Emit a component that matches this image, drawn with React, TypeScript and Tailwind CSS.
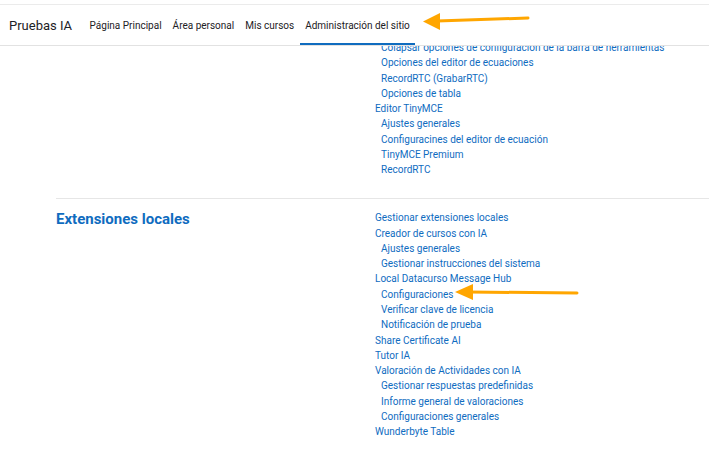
const font = { fontFamily: 'Roboto, "Open Sans", sans-serif' };

type Item = { label: string; sub?: boolean };

const previous: Item[] = [
  { label: 'Colapsar opciones de configuración de la barra de herramientas', sub: true },
  { label: 'Opciones del editor de ecuaciones', sub: true },
  { label: 'RecordRTC (GrabarRTC)', sub: true },
  { label: 'Opciones de tabla', sub: true },
  { label: 'Editor TinyMCE' },
  { label: 'Ajustes generales', sub: true },
  { label: 'Configuracines del editor de ecuación', sub: true },
  { label: 'TinyMCE Premium', sub: true },
  { label: 'RecordRTC', sub: true },
];

const local: Item[] = [
  { label: 'Gestionar extensiones locales' },
  { label: 'Creador de cursos con IA' },
  { label: 'Ajustes generales', sub: true },
  { label: 'Gestionar instrucciones del sistema', sub: true },
  { label: 'Local Datacurso Message Hub' },
  { label: 'Configuraciones', sub: true },
  { label: 'Verificar clave de licencia', sub: true },
  { label: 'Notificación de prueba', sub: true },
  { label: 'Share Certificate AI' },
  { label: 'Tutor IA' },
  { label: 'Valoración de Actividades con IA' },
  { label: 'Gestionar respuestas predefinidas', sub: true },
  { label: 'Informe general de valoraciones', sub: true },
  { label: 'Configuraciones generales', sub: true },
  { label: 'Wunderbyte Table' },
];

function LinkList({ items }: { items: Item[] }) {
  return (
    <ul className="text-[10px] leading-[15.27px] text-[#0f6cbf]">
      {items.map((item, i) => (
        <li key={i} className={`whitespace-nowrap ${item.sub ? 'pl-[6px]' : ''}`}>
          <a href="#">{item.label}</a>
        </li>
      ))}
    </ul>
  );
}

export default function App() {
  const nav = ['Página Principal', 'Área personal', 'Mis cursos', 'Administración del sitio'];

  return (
    <div className="relative min-h-[450px] w-[709px] overflow-hidden bg-white" style={font}>
      {/* fixed navbar */}
      <header className="absolute left-0 right-0 top-0 z-10 h-[46px] border-b border-[#e2e2e2] bg-white pt-[4px]">
        <div className="flex h-[41px] items-stretch border-t border-[#ebebeb]">
          <div className="flex items-center pl-[9px] pr-[12px] pt-[1px] text-[13px] text-[#1d2125]">Pruebas IA</div>
          <nav className="flex items-stretch text-[10px] text-[#1d2125]">
            {nav.map((n, i) => (
              <div
                key={n}
                className={`flex items-center px-[5.5px] pt-[1px] ${i === 3 ? 'border-b-[2.5px] border-[#0f6cbf] pt-[3.5px]' : ''}`}
              >
                {n}
              </div>
            ))}
          </nav>
        </div>
      </header>

      <main className="pl-[56px] pt-[40px]">
        <div className="grid grid-cols-[319px_1fr]">
          <div />
          <LinkList items={previous} />
        </div>

        <div className="mt-[21px] border-t border-[#e6e6e6] pt-[11px]">
          <div className="grid grid-cols-[319px_1fr]">
            <h3 className="text-[15px] font-bold leading-[19px] text-[#0f6cbf]">Extensiones locales</h3>
            <LinkList items={local} />
          </div>
        </div>
      </main>

      {/* annotation arrows */}
      <svg className="absolute left-[423px] top-[12px] z-20 h-[18px] w-[107px]" viewBox="0 0 107 18" fill="none">
        <line x1="14" y1="9" x2="105" y2="6" stroke="#ffa600" strokeWidth="3" strokeLinecap="round" />
        <polygon points="0,9.5 17,1 17,18" fill="#ffa600" />
      </svg>
      <svg className="absolute left-[455px] top-[283px] h-[18px] w-[125px]" viewBox="0 0 125 18" fill="none">
        <line x1="14" y1="9" x2="122" y2="10" stroke="#ffa600" strokeWidth="3" strokeLinecap="round" />
        <polygon points="0,9 18,1 18,17" fill="#ffa600" />
      </svg>
    </div>
  );
}
